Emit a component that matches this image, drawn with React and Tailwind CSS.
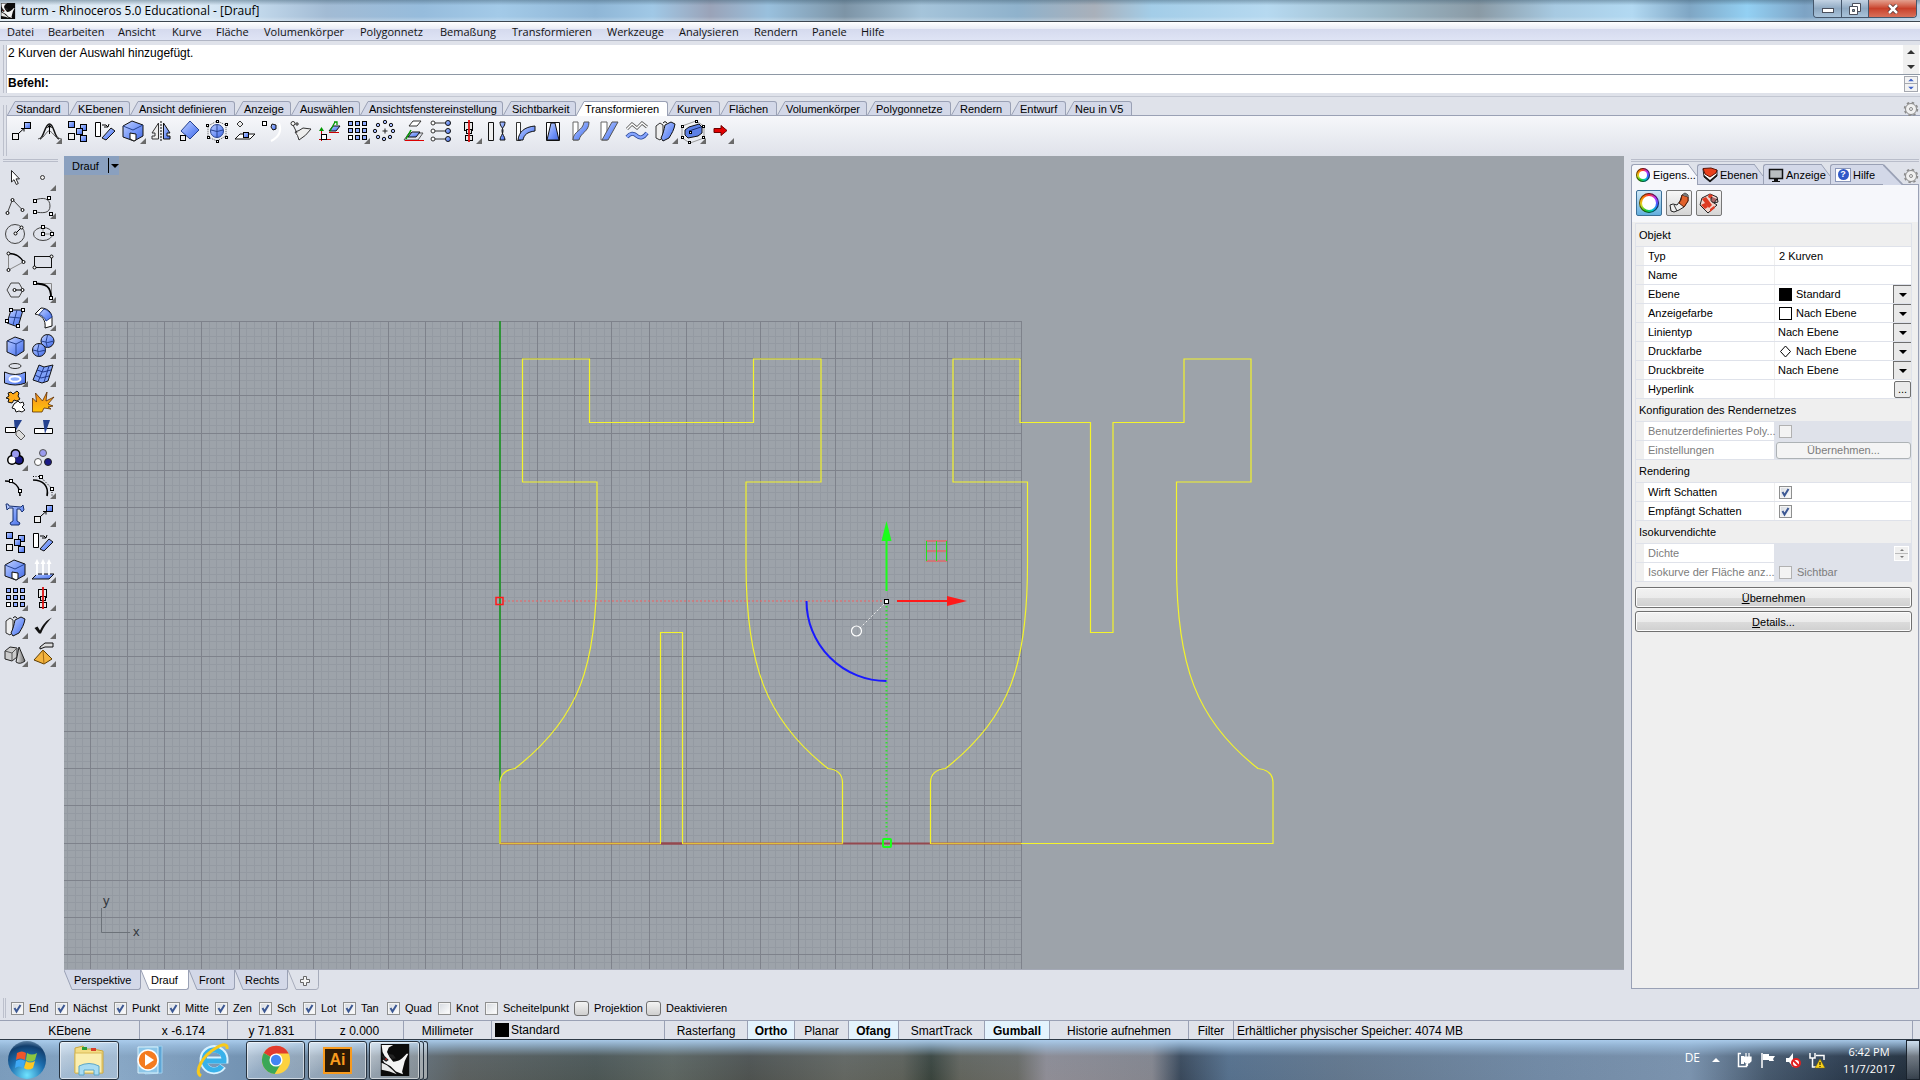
import React from "react";

const UI = "font-['Liberation_Sans',Arial,sans-serif]";

/* ---------- small drawing helpers ---------- */
const B = "url(#blue)";
const Sq = ({ x, y, s = 5, f = "#fff" }) => (
  <rect x={x} y={y} width={s} height={s} fill={f} stroke="#000" strokeWidth="1" />
);
const Dot = ({ x, y, r = 1.5 }) => <circle cx={x} cy={y} r={r} fill="#fff" stroke="#000" />;

const icons = {
  pointer: (
    <path d="M10.500 6.500V18l2.500-2.300 2.300 4.800 2-1-2.300-4.600h3.500z" fill="#fff" stroke="#222" />
  ),
  point: <circle cx="13.500" cy="13.500" r="2" fill="#eee" stroke="#333" />,
  polyline: (
    <>
      <path d="M6.500 20.500l5-13 10 10.500" fill="none" stroke="#444" />
      <Dot x={6.500} y={21} /><Dot x={11.500} y={8} /><Dot x={21.500} y={18} />
    </>
  ),
  curve: (
    <>
      <path d="M6 8c8-3 15-2 15 6s-8 7-15 6" fill="none" stroke="#444" />
      <Sq x={4.500} y={7.500} s={3} /><Sq x={18.500} y={4.500} s={3} /><Sq x={4.500} y={18.500} s={3} /><Sq x={20.500} y={20.500} s={3} />
    </>
  ),
  circle: (
    <>
      <circle cx="14" cy="14" r="9.500" fill="none" stroke="#444" />
      <path d="M14.500 13.500l6-6" stroke="#000" />
      <Dot x={14.500} y={13.500} /><Dot x={20.500} y={7.500} />
    </>
  ),
  ellipse: (
    <>
      <ellipse cx="14" cy="14" rx="9.500" ry="6.500" fill="none" stroke="#444" />
      <path d="M14 7v7h9" fill="none" stroke="#888" />
      <Sq x={12.500} y={5.500} s={3} /><Sq x={12.500} y={12.500} s={3} /><Sq x={21.500} y={12.500} s={3} />
    </>
  ),
  arc: (
    <>
      <path d="M7.500 22V5.500" stroke="#888" /><path d="M7.500 22l15-8" stroke="#888" />
      <path d="M7.500 5.500c7 0 12 3 15 8.500" fill="none" stroke="#000" strokeWidth="1.300" />
      <Dot x={7.500} y={5.500} /><Dot x={7.500} y={22} /><Dot x={22.500} y={14} />
    </>
  ),
  rect: (
    <>
      <rect x="5.500" y="8.500" width="17" height="11" fill="none" stroke="#111" />
      <Dot x={22.500} y={8.500} /><Dot x={5.500} y={19.500} />
    </>
  ),
  polygon: (
    <>
      <path d="M6 14l4-7h8l4 7-4 7h-8z" fill="none" stroke="#444" />
      <path d="M14 14h7.500" stroke="#000" /><Dot x={13.500} y={14} /><Dot x={21.500} y={14} />
    </>
  ),
  fillet: (
    <>
      <path d="M5 7.500h17.500v14" fill="none" stroke="#888" />
      <path d="M5 7.500c12 0 17 3 17 14" fill="none" stroke="#000" strokeWidth="1.800" />
      <Sq x={4.500} y={5.500} s={3} /><Sq x={20.500} y={20.500} s={3} />
    </>
  ),
  surface: (
    <>
      <path d="M10 6h12l-5 17-11-4z" fill={B} stroke="#111" />
      <path d="M8 13l11 1M16 6l-4 15" stroke="#26428f" />
      <Sq x={8.500} y={4.500} s={3} /><Sq x={20.500} y={4.500} s={3} /><Sq x={4.500} y={15.500} s={3} /><Sq x={15.500} y={20.500} s={3} />
    </>
  ),
  sweep: (
    <>
      <path d="M6 10l6-6c6 0 11 4 11 10v8l-7 2c1-8-3-13-10-14z" fill="#fff" stroke="#111" />
      <path d="M10 10.500l5-5.500c4 1 7 4 8 8l-6 4c-1-3-4-6-7-6.500z" fill={B} stroke="#26428f" />
    </>
  ),
  box: (
    <>
      <path d="M6 9l8-4 9 3v11l-8 5-9-4z" fill={B} stroke="#111" />
      <path d="M6 9l9 3 8-4M15 12v12" fill="none" stroke="#26428f" />
    </>
  ),
  spheres: (
    <>
      <circle cx="18.500" cy="9" r="6.500" fill={B} stroke="#111" />
      <path d="M12 9q7 3 13 0M18.500 3q-3 7 0 13" fill="none" stroke="#26428f" />
      <circle cx="10" cy="18" r="6.500" fill={B} stroke="#111" />
      <path d="M4 18q6 3 13 0M10 12q-3 6 0 13" fill="none" stroke="#26428f" />
    </>
  ),
  project: (
    <>
      <ellipse cx="14" cy="6" rx="6" ry="2.500" fill="none" stroke="#333" />
      <path d="M3.500 12q11 5 21 0v11q-10 4-21 0z" fill={B} stroke="#111" />
      <ellipse cx="14" cy="19" rx="5.500" ry="2.800" fill="#8fb0ff" stroke="#fff" strokeWidth="2" />
    </>
  ),
  mesh: (
    <>
      <path d="M10 5l5 2 9-2-5 16-6 2-9-3z" fill="#7ea0f8" stroke="#111" />
      <path d="M8 10l6 2 8-2M6 15l6 3 8-2M15 7l-6 15M20 6l-5 16" fill="none" stroke="#20388a" />
    </>
  ),
  puzzle: (
    <>
      <path d="M5 10l3-2-1-3 3-1 2 2 4-3 2 2-1 3 2 3-3 2-3-1-2 3-4-1 1-3z" fill="#ffab19" stroke="#111" />
      <path d="M13 16l4-3 2 2 3-1 1 3-2 2 3 3-3 2-3-1-3 1-1-3-3-1z" fill="#fff" stroke="#111" />
    </>
  ),
  explode: (
    <path d="M3.500 24V10l4 4-1-9 7 8L18 4l-1 9 8-4-6 7 5 2-5 1 3 2-7-1-2 4z" fill="url(#fire)" stroke="#5c2c00" strokeWidth=".8" />
  ),
  trim: (
    <>
      <path d="M13 4h8l-7 12z" fill="#24418f" /><path d="M4.500 11.500h10v5h-10z" fill="#fff" stroke="#000" />
      <path d="M15 16l3-2 6 6-4 4-5-5z" fill="#ddd" stroke="#555" />
    </>
  ),
  split: (
    <>
      <path d="M5.500 12.500h18v5h-18z" fill="#fff" stroke="#000" /><path d="M14 4h7l-5 14z" fill="#24418f" />
    </>
  ),
  group: (
    <>
      <circle cx="14.500" cy="10" r="5" fill="#000" /><circle cx="11" cy="16" r="5" fill="#000" /><circle cx="18" cy="16" r="5" fill="#000" />
      <circle cx="11" cy="16" r="3.500" fill="#fff" />
      <circle cx="18" cy="16" r="3.500" fill="#1b1b86" />
      <circle cx="14.500" cy="10" r="3.500" fill="#9a9aef" />
    </>
  ),
  ungroup: (
    <>
      <circle cx="14" cy="9" r="3.500" fill="#9a9aef" stroke="#555" />
      <circle cx="9" cy="18" r="3.500" fill="#fff" stroke="#555" />
      <circle cx="19" cy="18" r="3.500" fill="#1b1b86" stroke="#222" />
    </>
  ),
  editpts: (
    <>
      <path d="M4 9c9 0 15 5 15 15" fill="none" stroke="#000" strokeWidth="1.600" />
      <Sq x={8.500} y={7.500} s={3} /><Sq x={17.500} y={17.500} s={3} />
    </>
  ),
  ctrlpts: (
    <>
      <path d="M4 8c10 0 16 6 14 16" fill="none" stroke="#000" strokeWidth="1.600" />
      <path d="M4 4.500h7l12 12v7" fill="none" stroke="#000" strokeDasharray="1 1.500" />
      <Sq x={10.500} y={3.500} s={3} /><Sq x={21.500} y={15.500} s={3} />
    </>
  ),
  text: (
    <path d="M5 4h2l1 2 12 1 2-2 1 5-2 2-2-3h-3v12l3 2-1 2h-8l-1-2 3-2V8H8l-2 2z" fill={B} stroke="#173070" />
  ),
  move: (
    <>
      <Sq x={5.500} y={16.500} s={6} f="#eee" /><Sq x={17.500} y={5.500} s={6} f={B} />
      <path d="M12 16l5-4.500M17 11.500h-3M17 11.500v3" stroke="#000" />
    </>
  ),
  copy: (
    <>
      <Sq x={5.500} y={4.500} s={6} f={B} /><Sq x={17.500} y={7.500} s={6} f={B} /><Sq x={13.500} y={11.500} s={6} f={B} />
      <Sq x={5.500} y={16.500} s={6} f="#eee" /><Sq x={17.500} y={18.500} s={6} f={B} />
    </>
  ),
  rotate: (
    <>
      <path d="M4.500 5.500h5v14h-5z" fill="#fff" stroke="#000" />
      <path d="M11 21l9-10 4 3-9 9z" fill={B} stroke="#111" />
      <path d="M11 8q5-1 6 2M17 10l1-3M17 10h-4" fill="none" stroke="#000" />
    </>
  ),
  scale: (
    <>
      <path d="M4 9l9-5 11 4v11l-9 5-11-4z" fill={B} stroke="#111" />
      <path d="M4 9l10 4 10-5" fill="none" stroke="#26428f" />
      <path d="M11 16l6 1v6l-2 1-4-2z" fill="#fff" stroke="#111" />
    </>
  ),
  extrude: (
    <>
      <path d="M8 18h17l-5 5H3z" fill={B} stroke="#111" />
      <path d="M8 19V6M14 19V6M20 19V6" stroke="#fff" strokeWidth="1.800" />
      <path d="M5.500 8L8 3l2.500 5zM11.500 8L14 3l2.500 5zM17.500 8L20 3l2.500 5z" fill="#fff" />
    </>
  ),
  array: (
    <>
      {[5, 12, 19].map((y) => [5, 12, 19].map((x) => <Sq key={x + "-" + y} x={x + 0.5} y={y - 0.5} s={4} f={x === 5 && y === 19 ? "#fff" : "#8fabff"} />))}
    </>
  ),
  align: (
    <>
      <Sq x={9.500} y={5.500} s={8} f="#e8e8e8" /><rect x="11.500" y="12.500" width="5" height="4" fill="#ddd" stroke="#000" />
      <rect x="10.500" y="18.500" width="7" height="5" fill="#e8e8e8" stroke="#000" />
      <path d="M14 3v22" stroke="#d11" strokeWidth="1.800" />
    </>
  ),
  bend: (
    <>
      <path d="M5 9l4-3 3 2v12l-3 3-4-2z" fill="#eee" stroke="#333" />
      <path d="M14 8l6-3 4 2c-1 6-3 9-6 14l-6 3-2-3c2-4 3-8 4-13z" fill={B} stroke="#111" />
      <path d="M12 6q2-3 4 0" fill="none" stroke="#111" />
    </>
  ),
  check: <path d="M5.500 16l3-1.500 2.500 4c3-6 6-10 12-13-5 5-8 9-11 16h-2z" fill="#111" />,
  solids: (
    <>
      <path d="M4 11l5-4 7 1v9l-5 4-7-2z" fill="#ccc" stroke="#222" /><path d="M4 11l7 2 5-5M11 13v8" fill="none" stroke="#555" />
      <path d="M18 7l6 14q-5 4-9 1z" fill="url(#grey)" stroke="#222" />
    </>
  ),
  pyramid: (
    <>
      <path d="M11 7l5-4h8v4h-8l-5 2z" fill="#ddd" stroke="#111" />
      <path d="M14 10l9 9-8 5-10-4z" fill="#f3b33e" stroke="#5c3c00" /><path d="M14 10l1 14" stroke="#a36a12" />
    </>
  ),
  bump: (
    <>
      <path d="M5 22c4-2 5-15 9.500-15S19 20 24 22" fill="none" stroke="#111" strokeWidth="1.500" />
      <path d="M3 22l5-2c3-3 4-6 6-6s4 3 7 6l5 2" fill="none" stroke="#555" />
      <path d="M14.500 17v-8M12.500 11l2-3 2 3" fill="none" stroke="#000" />
    </>
  ),
  mirror: (
    <>
      <path d="M11.500 6v16H5v-3h3v-3H5z" fill="#eee" stroke="#333" /><path d="M16.500 6v16H23v-3h-3v-3h3z" fill={B} stroke="#111" />
      <path d="M14 4v20" stroke="#000" strokeDasharray="2 1" />
    </>
  ),
  orient: (
    <>
      <path d="M15 4l9 9-9 9-9-8z" fill={B} stroke="#26428f" /><Sq x={5.500} y={18.500} s={5} f="#eee" />
    </>
  ),
  cage: (
    <>
      <path d="M5 9l9-5 9 4v11l-9 5-9-4z" fill="none" stroke="#555" strokeDasharray="1 1" />
      <circle cx="14" cy="14" r="6.500" fill={B} stroke="#26428f" /><path d="M8 13q6 3 12 0M14 8v12" fill="none" stroke="#26428f" />
      {[[3, 7], [13, 3], [22, 6], [22, 19], [13, 23], [4, 19]].map(([x, y]) => <Sq key={x + "-" + y} x={x + 0.5} y={y + 0.5} s={2} />)}
    </>
  ),
  orientsrf: (
    <>
      <path d="M4 22l5-5h15l-5 5z" fill="#fff" stroke="#111" /><Sq x={12.500} y={15.500} s={5} f={B} />
      <path d="M9 4l3 3-3 3-3-3z" fill="#eee" stroke="#333" />
    </>
  ),
  flow: (
    <>
      <path d="M20 6c3 8 0 14-8 18" fill="none" stroke="#fff" strokeWidth="2" /><Sq x={3.500} y={4.500} s={4} />
      <path d="M13 7l4 1v4l-3 1-2-3z" fill={B} stroke="#111" />
    </>
  ),
  flowsrf: (
    <>
      <path d="M8 15q4-1 8-4l8 1q-5 7-12 11-1-5-4-8z" fill="#eee" stroke="#333" /><path d="M6 8l4 8M6 7h6M10 5v4" stroke="#333" /><circle cx="6" cy="6.500" r="2" fill="#fff" stroke="#333" />
    </>
  ),
  remap: (
    <>
      <path d="M6.500 24V14M4 22.500h12" stroke="#c00" /><path d="M4 14l2.500-4 2.500 4z" fill="#090" /><Sq x={6.500} y={17.500} s={5} />
      <path d="M14 14l4-5h7l-4 5z" fill={B} stroke="#111" /><path d="M15 14l5-9M19 5h3v3" fill="none" stroke="#090" strokeWidth="1.300" /><path d="M14 15.500h10" stroke="#c00" />
    </>
  ),
  polar: (
    <>
      {[[14, 5], [20, 8], [22, 14], [19, 20], [13, 22], [7, 20], [4, 14], [7, 8]].map(([x, y]) => (
        <circle key={x + "-" + y} cx={x} cy={y} r="1.700" fill="#a8bcff" stroke="#111" />
      ))}
      <path d="M14 11.500v5M11.500 14h5" stroke="#222" />
    </>
  ),
  project2: (
    <>
      <path d="M10 9l4-5h8l-4 5z" fill="#fff" stroke="#333" /><path d="M5 23l5-7h14l-5 7z" fill="#dfe2ea" stroke="#555" />
      <path d="M9 20l4-5h8l-4 5z" fill={B} stroke="#111" /><path d="M6 23.500h19" stroke="#d00" /><path d="M7 22l5-9" stroke="#090" strokeWidth="1.500" />
    </>
  ),
  setpts: (
    <>
      {[6, 14, 22].map((y) => (
        <g key={y}><path d={`M7 ${y}h13`} stroke="#333" /><circle cx="6" cy={y} r="2" fill="#fff" stroke="#333" /><circle cx="21" cy={y} r="2.500" fill={B} stroke="#111" /></g>
      ))}
    </>
  ),
  twist: (
    <>
      <path d="M5.500 5.500h5v18h-5z" fill="#eee" stroke="#111" />
      <path d="M17 5h5c0 5-3 5-3 9s3 5 3 9h-5c0-4 3-5 3-9s-3-4-3-9z" fill={B} stroke="#111" />
    </>
  ),
  bendpipe: (
    <>
      <path d="M5.500 5.500h4v18h-4z" fill="#fff" stroke="#333" /><path d="M7 23c1-8 6-13 17-14v5c-8 1-11 4-12 9z" fill={B} stroke="#111" />
    </>
  ),
  taper: (
    <><path d="M7.500 5.500h13v18h-13z" fill="#fff" stroke="#111" /><path d="M12 6h4l4 17H8z" fill={B} stroke="#111" /></>
  ),
  flowcrv: (
    <><path d="M6 5h5v18H6z" fill="#fff" stroke="#666" /><path d="M17 5h5c0 10-8 10-10 18H6c0-9 10-9 11-18z" fill={B} stroke="#555" /></>
  ),
  shear: (
    <><path d="M6 5h6v18H6z" fill="#fff" stroke="#666" /><path d="M17 5h6l-10 18H7z" fill={B} stroke="#555" /></>
  ),
  smooth: (
    <>
      <path d="M4 12l5-5 5 4 5-5 5 4" fill="none" stroke="#555" strokeWidth="3" /><path d="M4 12l5-5 5 4 5-5 5 4" fill="none" stroke="#fff" strokeWidth="1.500" />
      <path d="M4 20q5-6 10-1 5 4 10-3" fill="none" stroke="#26428f" strokeWidth="4" /><path d="M4 20q5-6 10-1 5 4 10-3" fill="none" stroke="#86a5ff" strokeWidth="2.500" />
    </>
  ),
  cageedit: (
    <>
      <path d="M3 9l14-5 8 5v12l-14 5-8-5z" fill="none" stroke="#999" /><path d="M6 13l4-3 10-3 3 3v6l-4 3-10 2-3-3z" fill="#5d80e6" stroke="#111" /><path d="M10 14l12-4" stroke="#1b2f70" />
      {[[2, 8], [16, 3], [23, 8], [23, 19], [9, 24], [2, 19], [10, 14]].map(([x, y]) => <Sq key={x + "-" + y} x={x + 0.5} y={y + 0.5} s={2} />)}
    </>
  ),
  redarrow: <path d="M7 11.500h7v-3l6 5-6 5v-3H7z" fill="#e30000" stroke="#6d0000" />,
};

const Tool = ({ name, menu }) => (
  <button type="button" aria-label={name} className="block h-7 w-7 shrink-0 hover:bg-white/60">
    <svg viewBox="0 0 28 28" className="h-7 w-7">
      {icons[name]}
      {menu && <path d="M27 21v6h-6z" fill="#6a6a6a" />}
    </svg>
  </button>
);

const topTools = [
  ["move"], ["bump", 1], ["copy"], ["rotate"], ["scale", 1], ["mirror"], ["orient"], ["cage"], ["orientsrf"], ["flow"], ["flowsrf"],
  ["remap"], ["array", 1], ["polar"], ["project2"], ["setpts"], ["align", 1], ["twist"], ["bendpipe"], ["taper"], ["flowcrv"], ["shear"],
  ["smooth"], ["bend", 1], ["cageedit", 1], ["redarrow", 1],
];

const sideTools = [
  ["pointer"], ["point", 1], ["polyline", 1], ["curve", 1], ["circle", 1], ["ellipse", 1], ["arc", 1], ["rect", 1], ["polygon", 1],
  ["fillet", 1], ["surface", 1], ["sweep", 1], ["box", 1], ["spheres", 1], ["project", 1], ["mesh", 1], ["puzzle"], ["explode"],
  ["trim"], ["split"], ["group", 1], ["ungroup"], ["editpts"], ["ctrlpts", 1], ["text"], ["move", 1], ["copy"], ["rotate"],
  ["scale", 1], ["extrude", 1], ["array", 1], ["align", 1], ["bend", 1], ["check", 1], ["solids", 1], ["pyramid", 1],
];

const Gear = () => (
  <svg viewBox="0 0 16 16" className="h-4 w-4 shrink-0">
    <circle cx="8" cy="8" r="5.500" fill="#f0f0f0" stroke="#8a8a8a" />
    <circle cx="8" cy="8" r="6.500" fill="none" stroke="#8a8a8a" strokeWidth="1.500" strokeDasharray="2.500 2.600" />
    <circle cx="8" cy="8" r="1.500" fill="none" stroke="#8a8a8a" />
  </svg>
);

const Rhino = ({ className }) => (
  <svg viewBox="0 0 32 36" className={className}>
    <rect width="32" height="36" fill="#0b0b0b" />
    <path d="M1 1h13L9 4 7 9l3 6 4 5c6 0 11-4 15-9l2 0-4 8-3 12 1 3-8-3-6-6-7-4-2-3 4-1-2-4-2-4z" fill="#f4f4f4" />
    <path d="M1 21l6 3 6 5 5 5-8-3-9-2z" fill="#e9e9e9" />
    <path d="M1 13l4 1 4 4-3 2-3-2zM8 11l6 1 3 4-4 1z" fill="#222" /><circle cx="6" cy="17" r="1" fill="#d02020" />
  </svg>
);

/* ---------- title, menu, command line ---------- */
const TitleBar = () => (
  <header className="flex h-[22px] shrink-0 items-center border-b border-[#3c4650] bg-[linear-gradient(180deg,rgba(60,90,110,.45),transparent_25%,transparent_80%,rgba(255,255,255,.3)),linear-gradient(90deg,#dbe7f2_0,#dfecf7_10%,#c6dcee_13%,#a2bbd4_17%,#96bcdc_22%,#a3cae8_26%,#8fb6d6_31%,#a0c8e6_34%,#9aa3b8_37%,#99c0dd_40%,#7d94a6_44%,#a5c4da_48%,#8fb2cc_53%,#a9b0ba_57%,#a3cde8_60%,#b6d9f0_66%,#9cb9c9_72%,#8a9aa5_77%,#a7cae2_81%,#b2d9f2_85%,#7fa6c4_88%,#93d0f3_91%,#7da3c4_94%,#b9d0e4_100%)]">
    <Rhino className="mr-[5px] h-4 w-4" />
    <h1 className="flex-1 font-['Open_Sans','Noto_Sans',sans-serif] text-[12px] leading-4 text-black">turm - Rhinoceros 5.0 Educational - [Drauf]</h1>
    <div className="mr-[3px] flex h-[18px] self-start overflow-hidden rounded-b-[4px] border border-t-0 border-[#45566b]">
      <button type="button" aria-label="Minimieren" className="flex w-7 items-center justify-center border-r border-[#45566b] bg-linear-to-b from-[#c3d3e4] via-[#8fa9c2] to-[#a9c3da]">
        <svg viewBox="0 0 12 6" className="mt-1 h-[6px] w-3"><rect x=".5" y=".5" width="11" height="4" fill="#fff" stroke="#4a4f5c" /></svg>
      </button>
      <button type="button" aria-label="Verkleinern" className="flex w-[27px] items-center justify-center border-r border-[#45566b] bg-linear-to-b from-[#c3d3e4] via-[#8fa9c2] to-[#a9c3da]">
        <svg viewBox="0 0 12 12" className="h-3 w-3"><path d="M3.500.500h8v8h-8z" fill="#fff" stroke="#4a4f5c" /><path d="M.500 3.500h8v8h-8z" fill="#fff" stroke="#4a4f5c" /><path d="M3.500 6.500h2v2h-2z" fill="#8aa" stroke="#4a4f5c" /></svg>
      </button>
      <button type="button" aria-label="Schließen" className="flex w-[47px] items-center justify-center bg-linear-to-b from-[#e3a08f] via-[#c8402a] to-[#d8705a]">
        <svg viewBox="0 0 12 10" className="h-[10px] w-3"><path d="M2 1l8 8M10 1l-8 8" stroke="#4a2a2a" strokeWidth="4" /><path d="M2 1l8 8M10 1l-8 8" stroke="#fff" strokeWidth="2.500" /></svg>
      </button>
    </div>
  </header>
);

const menus = [
  ["Datei", "w-[41px]"], ["Bearbeiten", "w-[70px]"], ["Ansicht", "w-[54px]"], ["Kurve", "w-[44px]"], ["Fläche", "w-[48px]"],
  ["Volumenkörper", "w-[96px]"], ["Polygonnetz", "w-[80px]"], ["Bemaßung", "w-[72px]"], ["Transformieren", "w-[95px]"],
  ["Werkzeuge", "w-[72px]"], ["Analysieren", "w-[75px]"], ["Rendern", "w-[58px]"], ["Panele", "w-[49px]"], ["Hilfe", "w-[40px]"],
];
const MenuBar = () => (
  <nav className="flex h-[19px] shrink-0 items-center border-b border-[#b0b5c4] bg-[linear-gradient(180deg,#fff_0,#e9ecf6_38%,#d5daee_40%,#dfe4f5_100%)] pt-[2px] pl-[7px] font-['Open_Sans','Noto_Sans',sans-serif] text-[11px] leading-4 text-[#111]">
    {menus.map(([m, w]) => <button key={m} type="button" className={`${w} text-left whitespace-nowrap`}>{m}</button>)}
  </nav>
);

const Tri = ({ up, className = "" }) => (
  <svg viewBox="0 0 8 4" className={`h-1 w-2 ${className}`}><path d={up ? "M0 4l4-4 4 4z" : "M0 0l4 4 4-4z"} fill="currentColor" /></svg>
);

const Command = () => (
  <section className="flex shrink-0 border-b border-[#c3c7d2] pt-1 pb-[3px] text-[12px] leading-4">
    <div className="ml-[3px] w-1 border-x border-[#bcc0cc]" />
    <div className="flex-1">
      <div className="flex h-[30px] border-b border-[#8e98a5] bg-white">
        <output className="flex-1 pl-[1px]">2 Kurven der Auswahl hinzugefügt.</output>
        <div className="mr-[1px] flex w-4 flex-col justify-between bg-[#f0f0f0] text-[#333]">
          <button type="button" aria-label="Nach oben" className="flex h-[14px] items-center justify-center"><Tri up /></button>
          <button type="button" aria-label="Nach unten" className="flex h-[14px] items-center justify-center"><Tri /></button>
        </div>
      </div>
      <div className="flex h-[18px] items-start bg-white">
        <label htmlFor="cmd" className="pl-[1px] font-bold">Befehl:</label>
        <input id="cmd" className="h-4 min-w-0 flex-1 pl-1 outline-none" />
        <div className="mt-px mr-[2px] w-[14px] border border-[#a5a8b0] text-[#3f62c8]">
          <button type="button" aria-label="Vorheriger" className="flex h-[7px] w-full items-center justify-center border-b border-[#a5a8b0] bg-[#f3f3f3]"><Tri up className="scale-75" /></button>
          <button type="button" aria-label="Nächster" className="flex h-[7px] w-full items-center justify-center bg-[#f3f3f3]"><Tri className="scale-75" /></button>
        </div>
      </div>
    </div>
  </section>
);

/* ---------- toolbar ---------- */
const tabs = [
  ["Standard", "w-[62px]"], ["KEbenen", "w-[61px]"], ["Ansicht definieren", "w-[105px]"], ["Anzeige", "w-[56px]"],
  ["Auswählen", "w-[69px]"], ["Ansichtsfenstereinstellung", "w-[143px]"], ["Sichtbarkeit", "w-[73px]"], ["Transformieren", "w-[92px]"],
  ["Kurven", "w-[52px]"], ["Flächen", "w-[57px]"], ["Volumenkörper", "w-[90px]"], ["Polygonnetze", "w-[84px]"],
  ["Rendern", "w-[60px]"], ["Entwurf", "w-[55px]"], ["Neu in V5", "w-[66px]"],
];
const Toolbar = () => (
  <section className="flex h-[59px] shrink-0 pt-1">
    <div className="mt-1 ml-[3px] w-1 border-x border-[#bcc0cc]" />
    <div className="flex flex-1 flex-col">
      <div className="flex h-[15px] shrink-0 justify-between border-b border-[#9aa1b5]">
        <div className="flex" role="tablist">
          {tabs.map(([t, w]) => {
            const on = t === "Transformieren";
            return (
              <button key={t} role="tab" aria-selected={on} type="button" className={`${w} flex h-[15px] text-[11px] leading-[15px] whitespace-nowrap`}>
                <svg viewBox="0 0 9 15" className="h-[15px] w-[9px] shrink-0">
                  <path d="M0 15L8 1h1v14z" fill={on ? "#fff" : "#d3d8e8"} /><path d="M0 15L8 .500h1" fill="none" stroke="#9aa1b5" />
                  {!on && <path d="M0 14.500h9" stroke="#9aa1b5" />}
                </svg>
                <span className={on ? "h-[15px] flex-1 rounded-tr-[3px] border-t border-r border-[#9aa1b5] bg-white text-left leading-[14px]" : "h-[15px] flex-1 rounded-tr-[3px] border-t border-r border-b border-[#9aa1b5] bg-[#d3d8e8] text-left leading-[14px]"}>{t}</span>
              </button>
            );
          })}
        </div>
        <button type="button" aria-label="Optionen" className="mr-[1px] h-4"><Gear /></button>
      </div>
      <div className="flex flex-1 items-start bg-linear-to-b from-[#f6f7fa] to-[#dfe2ea] pt-[1px]">
        {topTools.map(([n, m], i) => <Tool key={i} name={n} menu={m} />)}
      </div>
    </div>
  </section>
);

/* ---------- viewport ---------- */
const range = (n) => Array.from({ length: n }, (_, i) => i);
const OX = 499.5, OY = 842.5, U = 37.26;
const Viewport = () => (
  <svg viewBox="64 156 1560 814" preserveAspectRatio="xMinYMin slice" className="absolute inset-0 h-full w-full">
    <g stroke="#949aa2">
      {range(130).map((i) => <path key={i} d={`M${Math.round(OX + 14 * U - (i * U) / 5) + 0.5} 321V970`} />)}
      {range(88).map((i) => <path key={i} d={`M64 ${Math.round(OY - 14 * U + (i * U) / 5) + 0.5}H1021`} />)}
    </g>
    <g stroke="#7e828b">
      {range(26).map((i) => <path key={i} d={`M${Math.round(OX + (14 - i) * U) + 0.5} 321V970`} />)}
      {range(18).map((i) => <path key={i} d={`M64 ${Math.round(OY + (i - 14) * U) + 0.5}H1021`} />)}
    </g>
    <path d="M500 321V843" stroke="#2f9338" strokeWidth="2" />
    <path d="M500 843.500H1021" stroke="#94484e" strokeWidth="2" />
    <g fill="none" stroke="#f4f42a" strokeWidth="1.200">
      <path d="M660.500 843.500H500V784.500V782Q501 770 515 768.500C580 718 597 665 597 563.500V482H522.500V359H589.500V422.500H753.500V359H821V482H746V563.500C746 665 766 720 828 768.500Q842 770 842.500 782V843.500H682.500V632.500H660.500Z" />
      <path d="M930.500 843.500V782Q931 770 945.500 768.500C1010 718 1027.500 665 1027.500 563.500V482H953V359H1020V422.500H1090.500V632.500H1113V422.500H1184V359H1251V482H1176.500V563.500C1176.500 665 1196 720 1258 768.500Q1272.500 770 1273 782V843.500Z" />
    </g>
    <path d="M500 784V843" stroke="#c3d42a" strokeWidth="2" />
    <path d="M500 843.500H660M683 843.500H843M931 843.500H1021" stroke="#e2c03a" strokeWidth="1.500" />
    <path d="M661 843.500H682" stroke="#94484e" strokeWidth="2" />
    <path d="M504 601H884" stroke="#f06060" strokeDasharray="2 2" />
    <path d="M886.500 606V838" stroke="#2fe22f" strokeWidth="2" strokeDasharray="1.500 2.500" />
    <path d="M884 604L860 628" stroke="#eee" strokeDasharray="2 2" />
    <circle cx="856.500" cy="631" r="5" fill="none" stroke="#fff" strokeWidth="1.200" />
    <path d="M806.500 601A80 80 0 0 0 886.500 681" fill="none" stroke="#1a1aff" strokeWidth="2" />
    <path d="M886.500 591V530" stroke="#1aff1a" strokeWidth="2" /><path d="M886.500 521l5 20h-10z" fill="#1aff1a" />
    <path d="M897 601H950" stroke="#ff1a1a" strokeWidth="2" /><path d="M967 601l-20-5v10z" fill="#ff1a1a" />
    <path d="M926 541H947M926 551H947M926 561H947" stroke="#e06a6a" strokeWidth="1.500" />
    <path d="M926.500 541V561M936.500 541V561M946.500 541V561" stroke="#1ee61e" />
    <rect x="884.500" y="599.500" width="4" height="4" fill="#fff" stroke="#000" />
    <rect x="496" y="597.500" width="7" height="7" fill="none" stroke="#ff1a1a" strokeWidth="1.500" />
    <rect x="883" y="839" width="8" height="8" rx="1" fill="none" stroke="#1aff1a" strokeWidth="2" />
    <path d="M101.500 908V932.500H130" fill="none" stroke="#6c7279" />
    <text x="103" y="905" fontSize="13" fill="#33383d" fontFamily="Liberation Sans">y</text>
    <text x="133" y="936" fontSize="13" fill="#33383d" fontFamily="Liberation Sans">x</text>
  </svg>
);

const views = [["Perspektive", "w-[77px]"], ["Drauf", "w-[48px]"], ["Front", "w-[46px]"], ["Rechts", "w-[53px]"]];
const Center = () => (
  <main className="flex min-w-0 flex-1 flex-col">
    <div className="relative min-h-0 flex-1 overflow-hidden border-b border-[#a3a8b5] bg-[#9da3aa]">
      <Viewport />
      <button type="button" className="absolute top-0 left-0 flex h-[19px] w-[55px] items-center bg-[#8aa0bf] pl-2 text-[11px] leading-4">
        <span className="w-[36px] text-left">Drauf</span>
        <span className="mr-[2px] h-[15px] w-px bg-black" /><Tri className="shrink-0" />
      </button>
    </div>
    <div className="flex h-[26px] shrink-0" role="tablist">
      {views.map(([v, w]) => (
        <button key={v} role="tab" type="button" aria-selected={v === "Drauf"} className={`${w} flex h-5 text-[11px] leading-[21px]`}>
          <svg viewBox="0 0 10 20" className="h-5 w-[10px] shrink-0"><path d="M0 0h10v20H8z" fill={v === "Drauf" ? "#fff" : "#d3d8e8"} /><path d="M0 0l8 19.500h2" fill="none" stroke="#9aa1b5" /></svg>
          <span className={v === "Drauf" ? "h-5 flex-1 rounded-br-[3px] border-r border-b border-[#9aa1b5] bg-white text-left" : "h-5 flex-1 rounded-br-[3px] border-r border-b border-[#9aa1b5] bg-[#d3d8e8] text-left"}>{v}</span>
        </button>
      ))}
      <button type="button" aria-label="Neue Ansicht" className="flex h-5 w-[31px]">
        <svg viewBox="0 0 31 20" className="h-5 w-[31px]"><path d="M0 0l8 19.500h20q2.500 0 2.500-3V0" fill="none" stroke="#a7acbb" /><path d="M15.500 6.500h3v3h3v3h-3v3h-3v-3h-3v-3h3z" fill="#f4f4f4" stroke="#666" /></svg>
      </button>
    </div>
  </main>
);

/* ---------- properties panel ---------- */
const Check = ({ label, checked, disabled, name, cls = "", round }) => (
  <label className={`flex items-center gap-[5px] whitespace-nowrap ${disabled ? "text-[#7c7c7c]" : ""} ${cls}`}>
    <span className={round ? "relative h-[15px] w-[15px] shrink-0" : "relative h-[13px] w-[13px] shrink-0"}>
      <input type="checkbox" defaultChecked={checked} disabled={disabled} aria-label={name || label}
        className={round
          ? "peer block h-[15px] w-[15px] appearance-none rounded-[3px] border border-[#707070] bg-linear-to-b from-[#f4f4f4] to-[#cfcfcf]"
          : "peer block h-[13px] w-[13px] appearance-none border border-[#8e8f8f] bg-linear-to-br from-[#d5d9df] to-white shadow-[inset_0_0_0_1px_#f4f4f4] disabled:border-[#b1b1b1] disabled:bg-[#f3f3f3] disabled:bg-none"} />
      <svg viewBox="0 0 13 13" className="pointer-events-none absolute inset-0 hidden h-[13px] w-[13px] peer-checked:block"><path d="M3.500 6l2 3.500L9.500 3" fill="none" stroke="#3b5793" strokeWidth="2" /></svg>
    </span>
    {label}
  </label>
);

const Ring = ({ s = "h-4 w-4" }) => (
  <span className={`${s} block rounded-full bg-[conic-gradient(#f33,#b3f,#36f,#0cc,#2c2,#dd2,#f80,#f33)] p-[3px] ring-1 ring-black/60 ring-inset`}><span className="block h-full w-full rounded-full bg-white" /></span>
);

const Head = ({ children }) => <h2 className="flex h-[23px] items-center border-b border-[#dfe2ea] pl-[3px] text-[11px] font-normal">{children}</h2>;
const Row = ({ label, id, off, children }) => (
  <div className="flex h-[19px] border-b border-[#dfe2ea]">
    <div className="w-2 shrink-0 bg-[#efefef]" />
    <label htmlFor={id} className={off ? "w-[130px] shrink-0 bg-white pl-1 leading-[19px] whitespace-nowrap text-[#7c7c7c]" : "w-[130px] shrink-0 bg-white pl-1 leading-[19px] whitespace-nowrap"}>{label}</label>
    <div className={off ? "ml-px flex min-w-0 flex-1 items-center" : "ml-px flex min-w-0 flex-1 items-center bg-white"}>{children}</div>
  </div>
);
const Drop = ({ id, value, icon }) => (
  <div className="relative flex h-full flex-1 items-center">
    {icon && <span className="pointer-events-none absolute left-1">{icon}</span>}
    <select id={id} className={icon ? "h-full w-full appearance-none pl-[21px] outline-none" : "h-full w-full appearance-none pl-[3px] outline-none"}><option>{value}</option></select>
    <span className="pointer-events-none absolute right-0 flex h-[18px] w-[18px] items-center justify-center border border-r-0 border-b-0 border-[#6e6e6e] bg-[#e9e9e9]"><Tri /></span>
  </div>
);

const EbIcon = () => (
  <svg viewBox="0 0 16 16" className="h-4 w-4 shrink-0"><path d="M1 2l3 1 5 4 6-4v6l-7 6-6-5z" fill="#fff" stroke="#222" /><path d="M1 1.500l8-.5 6 2-1 3-6 4-5-3z" fill="#e8401c" stroke="#5c1205" /><path d="M2 8l6 5 7-6v2l-7 6-6-5z" fill="#111" /></svg>
);
const MonIcon = () => (
  <svg viewBox="0 0 16 16" className="h-4 w-4 shrink-0"><path d="M1.500 2.500h13v9h-13z" fill="#b9bdc0" stroke="#111" strokeWidth="1.500" /><path d="M6 12h4v2h2v1H4v-1h2z" fill="#111" /></svg>
);
const HelpIcon = () => (
  <span className="flex h-[14px] w-4 shrink-0 items-center justify-center border border-[#8b97b8] bg-white"><span className="flex h-[11px] w-[11px] items-center justify-center rounded-full bg-[#3059c8] text-[9px] leading-none font-bold text-white">?</span></span>
);
const panelTabs = [["Eigens...", "w-[66px]", <Ring key="r" s="h-[14px] w-[14px]" />], ["Ebenen", "w-[66px]", <EbIcon key="e" />], ["Anzeige", "w-[67px]", <MonIcon key="m" />], ["Hilfe", "w-[73px]", <HelpIcon key="h" />]];

const Panel = () => (
  <aside className="mr-[1px] ml-[7px] flex w-[288px] shrink-0 flex-col pt-[3px] pb-[7px] text-[11px] leading-4">
    <div className="mb-[2px] h-[3px] border-y border-[#b9bdca]" />
    <div className="flex h-[21px] shrink-0 border-b border-[#9aa1b5]">
      <div className="flex flex-1" role="tablist">
        {panelTabs.map(([t, w, icon], i) => (
          <button key={t} type="button" role="tab" aria-selected={i === 0} className={`${w} flex h-[21px] shrink-0`}>
            <span className={i === 0 ? "flex h-[21px] min-w-0 flex-1 items-center gap-[3px] rounded-tl-[3px] border-t border-l border-[#9aa1b5] bg-[#f6f7fb] pl-1 whitespace-nowrap" : "flex h-[21px] min-w-0 flex-1 items-center gap-[2px] rounded-tl-[3px] border border-r-0 border-[#9aa1b5] bg-[#d3d8e8] pl-1 whitespace-nowrap"}>{icon}{t}</span>
            <svg viewBox="0 0 9 21" preserveAspectRatio="none" className={i === 3 ? "h-[21px] w-5" : "-ml-[9px] h-[21px] w-[9px]"}>
              {i === 3 && <path d="M0 0L9 21H0z" fill="#d3d8e8" />}
              {i === 3 ? <path d="M0 .500L9 21" fill="none" stroke="#9aa1b5" /> : <path d="M0 0L9 12V0z" fill="#dfe2ea" />}
              {i < 3 && <path d="M0 0l9 12" stroke="#9aa1b5" />}
            </svg>
          </button>
        ))}
      </div>
      <button type="button" aria-label="Panel-Optionen" className="mt-1 h-4 shrink-0"><Gear /></button>
    </div>
    <div className="flex flex-1 flex-col border border-t-0 border-[#9aa1b5] bg-[#efefef]">
      <div className="flex h-[37px] shrink-0 gap-1 bg-[#f6f7fb] px-1 pt-[5px]">
        <button type="button" aria-label="Objekt" className="flex h-[26px] w-[26px] items-center justify-center rounded-[2px] border border-[#3c6f97] bg-linear-to-b from-[#cfe8f7] to-[#62aede]"><Ring s="h-5 w-5" /></button>
        <button type="button" aria-label="Material" className="flex h-[26px] w-[26px] items-center justify-center rounded-[2px] border border-[#777] bg-linear-to-b from-[#f7f7f7] to-[#d5d5d5]">
          <svg viewBox="0 0 22 22" className="h-[22px] w-[22px]"><path d="M14 3l3-2 3 2v6l-4 6-5 3-5 2-3-1-1-6 3-1 4 1 3-4z" fill="#eee" stroke="#222" /><path d="M14 3l6 2v4l-4 6-5-4 2-3z" fill="#e2622c" stroke="#5a1d06" /><path d="M14 3l3-2 3 2v2z" fill="#777" /><path d="M6 13l3 6" stroke="#333" /></svg>
        </button>
        <button type="button" aria-label="Textur" className="flex h-[26px] w-[26px] items-center justify-center rounded-[2px] border border-[#777] bg-linear-to-b from-[#f7f7f7] to-[#d5d5d5]">
          <svg viewBox="0 0 22 22" className="h-[22px] w-[22px]"><path d="M4 6l8-4 7 3 1 5-4 1 3 2-9 8-8-8z" fill="#f3d3ca" stroke="#222" /><path d="M4 7l4-2 3 4-4 2zM11 2l4 1-2 4-3-2zM7 11l4-2 3 4-3 3zM3 13l4-2 3 4-3 2zM12 17l4-3 1 2-5 4z" fill="#dd3a22" /><path d="M14 5q-3 4 2 6l3-4" fill="#a66" stroke="#222" /></svg>
        </button>
      </div>
      <div className="mt-px mr-[6px] ml-[3px] border border-b-0 border-[#dfe2ea]">
        <Head>Objekt</Head>
        <Row label="Typ"><span className="pl-1">2 Kurven</span></Row>
        <Row label="Name" id="p-name"><input id="p-name" className="h-full w-full px-1 outline-none" /></Row>
        <Row label="Ebene" id="p-eb"><Drop id="p-eb" value="Standard" icon={<span className="block h-[13px] w-[13px] bg-black" />} /></Row>
        <Row label="Anzeigefarbe" id="p-af"><Drop id="p-af" value="Nach Ebene" icon={<span className="block h-[13px] w-[13px] border border-black bg-white" />} /></Row>
        <Row label="Linientyp" id="p-lt"><Drop id="p-lt" value="Nach Ebene" /></Row>
        <Row label="Druckfarbe" id="p-df"><Drop id="p-df" value="Nach Ebene" icon={<svg viewBox="0 0 13 13" className="h-[13px] w-[13px]"><path d="M6.500 1l5 5.500-5 5.500-5-5.500z" fill="#fff" stroke="#000" /></svg>} /></Row>
        <Row label="Druckbreite" id="p-db"><Drop id="p-db" value="Nach Ebene" /></Row>
        <Row label="Hyperlink" id="p-hl"><input id="p-hl" className="h-full min-w-0 flex-1 px-1 outline-none" /><button type="button" className="h-[17px] w-[17px] rounded-[2px] border border-[#707070] bg-[#eaeaea] leading-[12px]">...</button></Row>
        <Head>Konfiguration des Rendernetzes</Head>
        <div className="bg-[#dfe2ea]">
          <Row off label="Benutzerdefiniertes Poly..."><Check disabled name="Benutzerdefiniertes Polygonnetz" cls="pl-1" /></Row>
          <Row off label="Einstellungen"><button type="button" disabled className="ml-[1px] h-[17px] w-full rounded-[3px] border border-[#adb2b5] bg-[#f4f4f4] leading-[14px] text-[#7c7c7c]">Übernehmen...</button></Row>
        </div>
        <Head>Rendering</Head>
        <Row label="Wirft Schatten"><Check checked name="Wirft Schatten" cls="pl-1" /></Row>
        <Row label="Empfängt Schatten"><Check checked name="Empfängt Schatten" cls="pl-1" /></Row>
        <Head>Isokurvendichte</Head>
        <div className="bg-[#dfe2ea]">
          <Row off label="Dichte">
            <div className="mr-[2px] ml-auto h-[15px] w-[15px] border border-white bg-[#f0f0f0] text-[#777]">
              <button type="button" disabled aria-label="Mehr" className="flex h-[7px] w-full items-center justify-center border-b border-[#bbb]"><Tri up className="scale-50" /></button>
              <button type="button" disabled aria-label="Weniger" className="flex h-[6px] w-full items-center justify-center"><Tri className="scale-50" /></button>
            </div>
          </Row>
          <Row off label="Isokurve der Fläche anz..."><Check disabled label="Sichtbar" cls="pl-1" /></Row>
        </div>
      </div>
      <div className="mt-[5px] mr-[6px] ml-[3px] flex flex-col gap-[3px]">
        <button type="button" className="h-[21px] rounded-[3px] border border-[#707070] bg-[linear-gradient(180deg,#f2f2f2,#ebebeb_50%,#dcdcdc_50%,#cfcfcf)] shadow-[inset_0_0_0_1px_#fcfcfc]"><u>Ü</u>bernehmen</button>
        <button type="button" className="h-[21px] rounded-[3px] border border-[#707070] bg-[linear-gradient(180deg,#f2f2f2,#ebebeb_50%,#dcdcdc_50%,#cfcfcf)] shadow-[inset_0_0_0_1px_#fcfcfc]"><u>D</u>etails...</button>
      </div>
    </div>
  </aside>
);

/* ---------- bottom bars ---------- */
const snaps = [
  ["End", "w-[44px]", 1], ["Nächst", "w-[59px]", 1], ["Punkt", "w-[53px]", 1], ["Mitte", "w-[48px]", 1], ["Zen", "w-[44px]", 1], ["Sch", "w-[44px]", 1],
  ["Lot", "w-[40px]", 1], ["Tan", "w-[44px]", 1], ["Quad", "w-[51px]", 1], ["Knot", "w-[47px]", 0], ["Scheitelpunkt", "w-[89px]", 0],
  ["Projektion", "w-[72px]", 0], ["Deaktivieren", "w-[90px]", 0],
];
const status = [
  ["KEbene", "w-[140px]"], ["x -6.174", "w-[88px]"], ["y 71.831", "w-[88px]"], ["z 0.000", "w-[88px]"], ["Millimeter", "w-[88px]"], ["Standard", "w-[173px]"],
  ["Rasterfang", "w-[83px]"], ["Ortho", "w-[47px]"], ["Planar", "w-[54px]"], ["Ofang", "w-[50px]"], ["SmartTrack", "w-[86px]"], ["Gumball", "w-[65px]"],
  ["Historie aufnehmen", "w-[139px]"], ["Filter", "w-[45px]"],
];
const Bottom = () => (
  <>
    <section className="flex h-6 shrink-0 items-center text-[11px] leading-4">
      <div className="mr-[5px] ml-[3px] h-5 w-[3px] border-x border-[#bcc0cc]" />
      {snaps.map(([s, w, c], i) => <Check key={s} label={s} checked={!!c} cls={w} round={i > 10} />)}
    </section>
    <footer className="flex h-[19px] shrink-0 border-t border-[#9aa1b5] text-[12px] leading-5">
      {status.map(([s, w]) =>
        s === "Standard" ? (
          <div key={s} className={`${w} flex items-center border-r border-[#9aa1b5] pl-[3px]`}><span className="mr-[2px] h-[14px] w-[14px] bg-black" />Standard</div>
        ) : (
          <button key={s} type="button" className={`${w} border-r border-[#9aa1b5] text-center whitespace-nowrap ${["Ortho", "Ofang", "Gumball"].includes(s) ? "bg-[#e4f3fd] font-bold" : ""}`}>{s}</button>
        )
      )}
      <div className="mr-[7px] flex-1 border-r border-[#9aa1b5] pl-[3px]">Erhältlicher physischer Speicher: 4074 MB</div>
    </footer>
  </>
);

const taskBtn = "flex h-[39px] items-center justify-center rounded-[3px] border border-[#26323f] bg-linear-to-br from-white/60 via-white/25 to-white/20 shadow-[inset_0_0_0_1px_rgba(255,255,255,.55)]";
const Taskbar = () => (
  <footer className="flex h-[41px] shrink-0 items-center border-t border-[#2e3a47] bg-[linear-gradient(180deg,rgba(172,206,238,.95)_0,rgba(160,195,228,.7)_14%,rgba(120,150,180,.1)_40%,transparent_100%),linear-gradient(90deg,#7b9cbc_0,#8aa9c7_6%,#7292b2_13%,#6d7d8c_20%,#5b605f_24%,#4c5654_31%,#5d6560_35%,#4e524f_39%,#636660_44%,#5d6058_47%,#39433c_48.5%,#62645c_50%,#6a6b66_53%,#8f8d95_54.5%,#85868e_60%,#39485a_61.5%,#56708c_64%,#63778d_70%,#7189a4_80%,#7b93ae_88%,#46586c_92%,#2c3b4d_96%,#1f2a36_100%)]">
    <button type="button" aria-label="Start" className="ml-2 flex h-[38px] w-[38px] items-center justify-center rounded-full bg-[radial-gradient(circle_at_50%_90%,#6fe3ff,#1d6fb0_45%,#123e6d_75%,#a9c6dd_100%)]">
      <svg viewBox="0 0 24 24" className="h-6 w-6"><path d="M2 5q5-3 9 0l-1 7q-5-3-9 0z" fill="#f0562a" /><path d="M12 5q5 3 10 0l-2 7q-5 3-9 0z" fill="#8cc63f" /><path d="M1 13q5-3 9 0l-2 7q-4-3-8 0z" fill="#3fa9f5" /><path d="M11 13q4 3 9 0l-2 7q-5 3-9 0z" fill="#fdc722" /></svg>
    </button>
    <button type="button" aria-label="Explorer" className={`${taskBtn} ml-[13px] w-[60px]`}>
      <svg viewBox="0 0 34 32" className="h-8 w-[34px]"><path d="M3 4l8-2 2 3h8l10 2v22H3z" fill="#f3dc84" stroke="#c9a63e" /><path d="M3 9h27v20H3z" fill="#faeeb0" stroke="#d8ba58" /><path d="M10 3h5v3h-5z" fill="#2a9d3a" /><path d="M19 4h5v3h-5z" fill="#d8402a" /><path d="M7 31v-9q10-5 20 0v9h-5v-5H12v5z" fill="#a7dcf3" stroke="#5ba6c8" /></svg>
    </button>
    <button type="button" aria-label="Media Player" className="ml-[14px] flex h-[38px] w-[34px] items-center justify-center">
      <svg viewBox="0 0 30 32" className="h-8 w-[30px]"><path d="M10 3l17-1v27l-17 1z" fill="#5fa6d6" stroke="#9fd0ee" /><path d="M3 3h20v26H3z" fill="#8cc6e8" stroke="#d8effa" /><circle cx="13" cy="16" r="10" fill="#f47b20" stroke="#fff" strokeWidth="1.500" /><path d="M10 10l9 6-9 6z" fill="#fff" /></svg>
    </button>
    <button type="button" aria-label="Internet Explorer" className="ml-[29px] flex h-[38px] w-[34px] items-center justify-center">
      <svg viewBox="0 0 34 36" className="h-9 w-[34px]"><path d="M27 24a11 11 0 1 1 2-6H11" fill="none" stroke="#d9f2ff" strokeWidth="7" /><path d="M26 24a10 10 0 1 1 2-5H10" fill="none" stroke="#38b1ea" strokeWidth="5" /><path d="M5 34C-2 30 6 14 20 6c6-4 12-5 11 1" fill="none" stroke="#f8c91c" strokeWidth="3" /></svg>
    </button>
    <button type="button" aria-label="Chrome" className={`${taskBtn} ml-4 w-[59px]`}>
      <svg viewBox="0 0 32 32" className="h-[30px] w-[30px]"><circle cx="16" cy="16" r="15" fill="#fdd23f" /><path d="M16 16L3 8.500A15 15 0 0 1 29.500 9H16z" fill="#e23b2e" /><path d="M16 16l-13-7.500A15 15 0 0 0 14.500 31L22 19z" fill="#3aa757" /><circle cx="16" cy="16" r="7" fill="#fff" /><circle cx="16" cy="16" r="5.500" fill="#4285f4" /></svg>
    </button>
    <button type="button" aria-label="Illustrator" className={`${taskBtn} ml-[3px] w-[59px]`}>
      <span className="flex h-[27px] w-[29px] items-center justify-center border-2 border-[#f79a1e] bg-[#2d1a04] text-[16px] font-bold text-[#f79a1e]">Ai</span>
    </button>
    <button type="button" aria-label="Rhinoceros" className={`${taskBtn} ml-[2px] w-[51px]`}><Rhino className="h-8 w-8" /></button>
    <span className="h-[39px] w-1 rounded-r-[3px] border border-l-0 border-[#26323f] bg-white/40" /><span className="h-[39px] w-1 rounded-r-[3px] border border-l-0 border-[#26323f] bg-white/40" />
    <div className="ml-auto flex h-full items-center text-white">
      <span className="mr-3 mb-1 font-['Open_Sans','Noto_Sans',sans-serif] text-[12px]">DE</span>
      <Tri up className="mr-4" />
      <svg viewBox="0 0 92 18" className="mr-[13px] h-[18px] w-[92px]">
        <path d="M5 2.500H2.500v13h8v-3" fill="none" stroke="#fff" strokeWidth="1.500" /><path d="M5 5h3v8H5z" fill="#fff" /><path d="M8 6h7v4l-2 2h-3l-2-2zM10 2v4M13 2v4M11.500 12v3" fill="#fff" stroke="#fff" strokeWidth="1.200" />
        <path d="M26 2v15" stroke="#fff" strokeWidth="1.500" /><path d="M27 3h6v2h6l-2 3 1 2h-5V9h-6z" fill="#fff" />
        <path d="M50 7h3l4-5v14l-4-5h-3z" fill="#fff" /><circle cx="60" cy="12" r="4" fill="#fff" stroke="#e02020" strokeWidth="2" /><path d="M57 9l6 6" stroke="#e02020" strokeWidth="2" />
        <path d="M74 2v5h5V2M76.500 7v9h4M80 4.500h8V9" fill="none" stroke="#fff" strokeWidth="1.500" /><path d="M84 8l5 9H79z" fill="#fbd31c" stroke="#7a6200" strokeWidth=".5" /><path d="M84 11v3M84 15v1" stroke="#000" />
      </svg>
      <time className="w-[56px] text-center font-['Open_Sans','Noto_Sans',sans-serif] text-[11px] leading-[17px]">6:42 PM<br />11/7/2017</time>
      <button type="button" aria-label="Desktop anzeigen" className="ml-[9px] h-[40px] w-[14px] border border-[#1a232d] bg-linear-to-b from-white/50 to-white/10" />
    </div>
  </footer>
);

export default function App() {
  return (
    <div className={`${UI} flex h-screen min-h-[900px] flex-col overflow-hidden bg-[#dfe2ea] text-black`}>
      <svg className="absolute h-0 w-0" aria-hidden="true">
        <defs>
          <linearGradient id="blue" x1="0" y1="0" x2="1" y2="1"><stop offset="0" stopColor="#c3d2ff" /><stop offset=".6" stopColor="#6f92f7" /><stop offset="1" stopColor="#4468dd" /></linearGradient>
          <linearGradient id="fire" x1="0" y1="0" x2="0" y2="1"><stop offset="0" stopColor="#f58a1f" /><stop offset="1" stopColor="#ffc30b" /></linearGradient>
          <linearGradient id="grey"><stop offset="0" stopColor="#eee" /><stop offset="1" stopColor="#666" /></linearGradient>
        </defs>
      </svg>
      <TitleBar />
      <MenuBar />
      <Command />
      <Toolbar />
      <div className="flex min-h-0 flex-1">
        <aside className="w-16 shrink-0 pt-[3px]">
          <div className="mb-[2px] ml-[3px] h-[3px] w-[55px] border-y border-[#b9bdca]" />
          <div className="ml-px grid w-14 grid-cols-2">{sideTools.map(([n, m], i) => <Tool key={i} name={n} menu={m} />)}</div>
        </aside>
        <Center />
        <Panel />
      </div>
      <Bottom />
      <Taskbar />
    </div>
  );
}
